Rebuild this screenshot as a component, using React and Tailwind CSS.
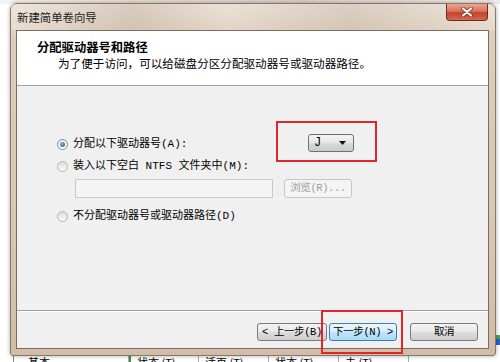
import React from 'react'

const mono = "font-['Liberation_Mono','Noto_Sans_CJK_SC',monospace]"
const cjk = "font-['Noto_Sans_CJK_SC','Noto_Sans',sans-serif]"

function Radio({ checked }) {
  return (
    <span
      className={`w-[11px] h-[11px] rounded-full border flex items-center justify-center shrink-0 ${
        checked
          ? 'border-[#7d8a96] bg-[linear-gradient(to_bottom,#e8eef4,#ffffff)]'
          : 'border-[#b4b4b4] bg-[linear-gradient(to_bottom,#dcdcdc,#fbfbfb)]'
      }`}
    >
      {checked && (
        <span className="w-[5px] h-[5px] rounded-full bg-[radial-gradient(circle_at_40%_35%,#7fb2e0,#1e4f7e)]" />
      )}
    </span>
  )
}

function Button({ children, className = '', disabled, focused }) {
  return (
    <div
      className={`h-[18px] rounded-[3px] border flex items-center justify-center text-[10.5px] tracking-[-0.4px] whitespace-nowrap leading-none ${mono} ${
        focused
          ? 'border-[#3c7fb1] bg-[linear-gradient(to_bottom,#eaf6fd_0%,#d9f0fc_45%,#bee6fd_50%,#a7d9f5_100%)] text-black'
          : disabled
          ? 'border-[#c4c7ca] bg-[#f4f4f4] text-[#a0a0a0]'
          : 'border-[#7a7a7a] bg-[linear-gradient(to_bottom,#f2f2f2_0%,#ebebeb_45%,#dddddd_50%,#cfcfcf_100%)] text-black'
      } ${className}`}
    >
      {children}
    </div>
  )
}

export default function App() {
  return (
    <div className={`w-[500px] h-[362px] bg-white overflow-hidden relative ${cjk}`}>
      {/* blurred desktop behind the dialog */}
      <div className="absolute top-0 left-0 right-0 h-[4px] bg-[linear-gradient(to_right,#f4f4f4,#e4ddd4_30%,#d8d2cc_60%,#ecebea)]" />
      <div className="absolute right-0 top-[335px] w-[6px] h-[4px] bg-[#4ca64c]" />
      <div className="absolute right-0 top-[339px] w-[6px] h-[6px] bg-[#2f5fd0]" />
      <div className="absolute left-0 right-0 top-[356px] h-[6px] bg-white flex text-[11px] leading-none text-black">
        <div className="w-[14px] border-r border-[#888]" />
        <div className="w-[115px] pl-[14px] pt-[1px] border-r border-[#aaa]">基本</div>
        <div className="w-[70px] pl-[6px] pt-[1px] border-r border-[#aaa] border-l-2 border-l-[#3a9a3a]">状态 (T)</div>
        <div className="w-[70px] pl-[6px] pt-[1px] border-r border-[#aaa]">活页 (T)</div>
        <div className="w-[70px] pl-[6px] pt-[1px] border-r border-[#aaa]">状态 (T)</div>
        <div className="w-[70px] pl-[6px] pt-[1px] border-r border-[#aaa]">未 (T)</div>
      </div>

      {/* dialog window */}
      <div className="absolute left-[10px] top-[3px] w-[486px] h-[353px] rounded-t-[7px] rounded-b-[3px] border border-[#8c7763] bg-[linear-gradient(to_bottom,#e8ddd1,#dccdbc_10%,#d8c8b6_60%,#cfbda9)] shadow-[0_0_4px_rgba(0,0,0,0.35)] flex flex-col">
        {/* title bar */}
        <div className="h-[26px] shrink-0 flex items-center pl-[6px] relative bg-[linear-gradient(to_right,rgba(255,255,255,0.25),rgba(150,130,110,0.18)_25%,rgba(255,255,255,0.1)_45%,rgba(150,130,110,0.15)_70%,rgba(255,255,255,0.2))]">
          <span className="text-[11.4px] leading-none text-[#1e1e1e] pt-[1px]">新建简单卷向导</span>
          <div className="absolute right-[7px] top-0 w-[42px] h-[17px] rounded-b-[4px] border border-t-0 border-[#6e2a1e] bg-[linear-gradient(to_bottom,#eba594_0%,#d9735f_45%,#c5422a_55%,#d26a50_100%)] flex items-center justify-center">
            <svg width="12" height="10" viewBox="0 0 12 10">
              <path d="M2 1.5 L10 8.5 M10 1.5 L2 8.5" stroke="#6a2a20" strokeWidth="3.6" strokeLinecap="round" />
              <path d="M2 1.5 L10 8.5 M10 1.5 L2 8.5" stroke="#ffffff" strokeWidth="2.2" strokeLinecap="round" />
            </svg>
          </div>
        </div>

        {/* client area */}
        <div className="ml-[5px] mr-[6px] h-[319px] shrink-0 border border-[#7e6d5c] bg-[#f0f0f0] flex flex-col">
          {/* header */}
          <div className="h-[55px] shrink-0 bg-white border-b border-[#a0a0a0] pl-[20px] pt-[8px]">
            <div className="text-[12.3px] font-bold leading-[16px] text-black">分配驱动器号和路径</div>
            <div className="text-[11.6px] leading-[16px] text-black pl-[21px]">
              为了便于访问，可以给磁盘分区分配驱动器号或驱动器路径。
            </div>
          </div>

          {/* body */}
          <div className="h-[224px] shrink-0 pl-[40px] pt-[48px] flex flex-col">
            <div className="flex items-center h-[18px]">
              <div className="w-[251px] shrink-0 flex items-center gap-[5px] pt-[3px]">
                <Radio checked />
                <span className={`text-[11px] leading-none text-black ${mono}`}>分配以下驱动器号(A):</span>
              </div>
              <div className="relative">
                <div className="w-[46px] h-[18px] rounded-[3px] border border-[#707070] bg-[linear-gradient(to_bottom,#f4f4f4_0%,#e8e8e8_45%,#d8d8d8_55%,#cacaca_100%)] flex items-center justify-between pl-[5px] pr-[7px]">
                  <span className={`text-[12px] leading-none text-black ${mono}`}>J</span>
                  <svg width="7" height="4" viewBox="0 0 7 4">
                    <path d="M0 0 H7 L3.5 4 Z" fill="#111" />
                  </svg>
                </div>
                <div className="absolute -left-[32px] -right-[23px] -top-[13px] -bottom-[10px] border-2 border-[#e0262b]" />
              </div>
            </div>

            <div className="flex items-center gap-[5px] h-[14px] mt-[7px]">
              <Radio />
              <span className={`text-[11px] leading-none text-black ${mono}`}>装入以下空白 NTFS 文件夹中(M):</span>
            </div>

            <div className="flex items-center mt-[6px] ml-[18px] gap-[11px]">
              <div className="w-[198px] h-[19px] border border-[#c9c9c9] bg-[#f4f4f4]" />
              <Button disabled className="w-[68px] h-[19px]">浏览(R)...</Button>
            </div>

            <div className="flex items-center gap-[5px] h-[14px] mt-[11px]">
              <Radio />
              <span className={`text-[11px] leading-none text-black ${mono}`}>不分配驱动器号或驱动器路径(D)</span>
            </div>
          </div>

          {/* footer */}
          <div className="flex-1 border-t border-[#a0a0a0] shadow-[inset_0_1px_0_#ffffff] pt-[12px] pr-[10px] flex justify-end">
            <Button className="w-[70px]">&lt; 上一步(B)</Button>
            <div className="relative ml-[2px]">
              <Button focused className="w-[68px]">下一步(N) &gt;</Button>
              <div className="absolute -left-[8px] -right-[6px] -top-[13px] -bottom-[6px] border-2 border-[#e0262b]" />
            </div>
            <Button className="w-[68px] ml-[13px]">取消</Button>
          </div>
        </div>
      </div>
    </div>
  )
}
